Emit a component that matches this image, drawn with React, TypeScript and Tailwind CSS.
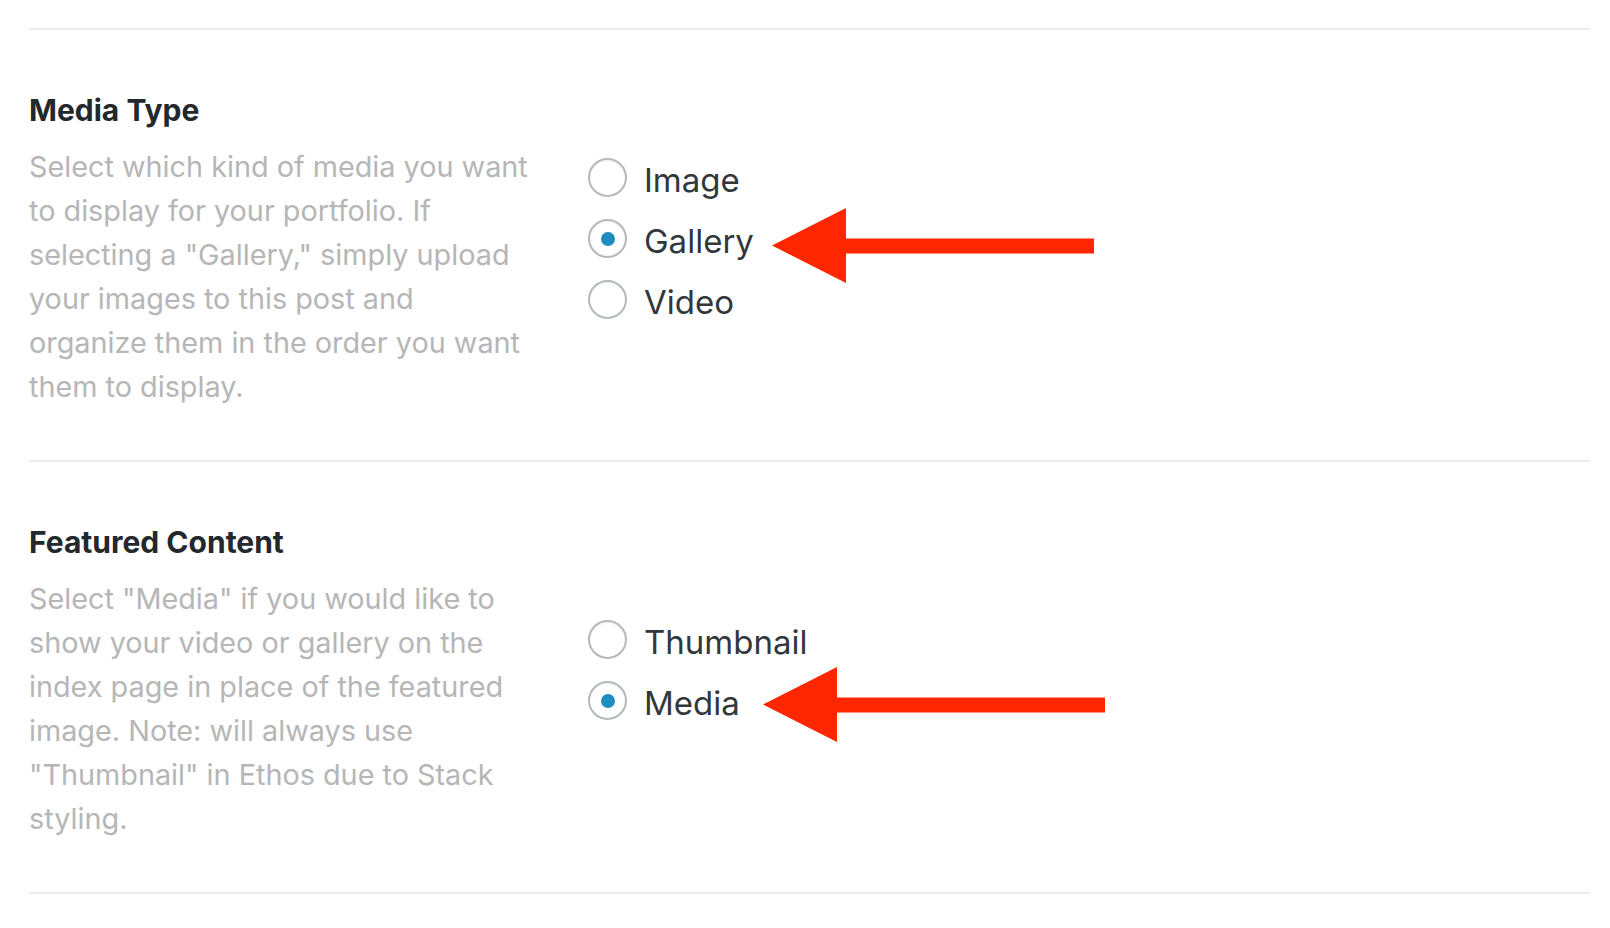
import React from "react";

const font = { fontFamily: "Inter, 'Noto Sans', sans-serif" };

function Radio({ checked, label }: { checked?: boolean; label: string }) {
  return (
    <div className="flex h-[61px] items-center gap-[17px]">
      <span className="flex h-[39px] w-[39px] shrink-0 items-center justify-center rounded-full border-2 border-[#b4b9be] bg-white shadow-[inset_0_1px_2px_rgba(0,0,0,0.07)]">
        {checked && <span className="block h-[14px] w-[14px] rounded-full bg-[#1e8cbe]" />}
      </span>
      <span className="pt-[5px] text-[33px] leading-none text-[#32373c]">{label}</span>
    </div>
  );
}

function Arrow({ width }: { width: number }) {
  const h = 75;
  return (
    <svg width={width} height={h} viewBox={`0 0 ${width} ${h}`}>
      <path
        d={`M0 37.5 L74 0 L74 30.5 L${width} 30.5 L${width} 45.5 L74 45.5 L74 75 Z`}
        fill="#ff2600"
      />
    </svg>
  );
}

function Section({
  title,
  lines,
  options,
  radioTop,
  arrow,
}: {
  title: string;
  lines: string[];
  options: { label: string; checked?: boolean }[];
  radioTop: string;
  arrow: React.ReactNode;
}) {
  return (
    <div className="relative flex h-[430px]">
      <div className="w-[559px] shrink-0 pt-[63px]">
        <h2 className="text-[30px] font-bold leading-[34px] text-[#23282d]">{title}</h2>
        <p className="mt-[18px] text-[28.8px] leading-[44px] text-[#b6b6b6]">
          {lines.map((l, i) => (
            <React.Fragment key={i}>
              {l}
              {i < lines.length - 1 && <br />}
            </React.Fragment>
          ))}
        </p>
      </div>
      <div className={radioTop}>
        {options.map((o) => (
          <Radio key={o.label} label={o.label} checked={o.checked} />
        ))}
      </div>
      {arrow}
    </div>
  );
}

export default function App() {
  return (
    <div className="min-h-screen bg-white pl-[29px] pr-[20px] pt-[28px]" style={font}>
      <div className="h-[2px] bg-[#ececec]" />
      <Section
        title="Media Type"
        lines={[
          "Select which kind of media you want",
          "to display for your portfolio. If",
          'selecting a "Gallery," simply upload',
          "your images to this post and",
          "organize them in the order you want",
          "them to display.",
        ]}
        options={[{ label: "Image" }, { label: "Gallery", checked: true }, { label: "Video" }]}
        radioTop="pt-[117px]"
        arrow={
          <div className="absolute left-[743px] top-[178px]">
            <Arrow width={322} />
          </div>
        }
      />
      <div className="h-[2px] bg-[#ececec]" />
      <Section
        title="Featured Content"
        lines={[
          'Select "Media" if you would like to',
          "show your video or gallery on the",
          "index page in place of the featured",
          "image. Note: will always use",
          '"Thumbnail" in Ethos due to Stack',
          "styling.",
        ]}
        options={[{ label: "Thumbnail" }, { label: "Media", checked: true }]}
        radioTop="pt-[147px]"
        arrow={
          <div className="absolute left-[734px] top-[205px]">
            <Arrow width={342} />
          </div>
        }
      />
      <div className="h-[2px] bg-[#ececec]" />
    </div>
  );
}
